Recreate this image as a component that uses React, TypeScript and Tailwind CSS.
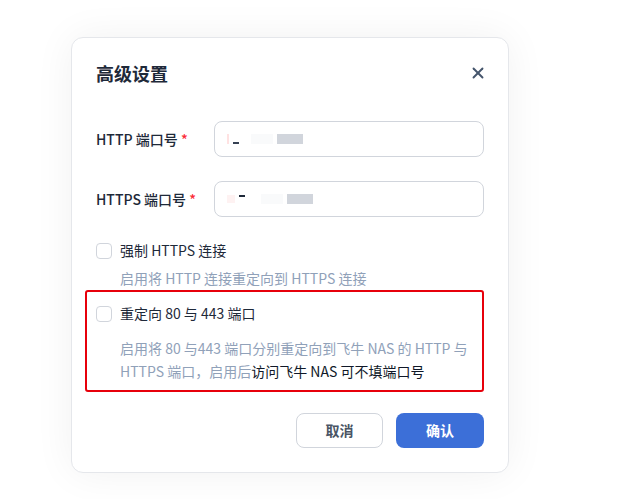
import { X } from 'lucide-react'

const font = { fontFamily: '"Noto Sans CJK SC", "Noto Sans", sans-serif' }

function Checkbox() {
  return <span className="w-4 h-4 shrink-0 rounded-[4px] border border-gray-300 bg-white" />
}

function PortField({ label, marks }: { label: string; marks: 'a' | 'b' }) {
  return (
    <div className="flex items-center">
      <label className="w-[118px] text-[14px] font-medium text-gray-800">
        {label} <span className="text-red-500">*</span>
      </label>
      <div className="flex-1 h-[36px] rounded-lg border border-gray-300 bg-white flex items-center px-3 gap-1">
        {marks === 'a' ? (
          <>
            <span className="w-[2px] h-[10px] bg-red-100" />
            <span className="w-[6px] h-[2px] bg-gray-700 mt-[8px]" />
            <span className="w-[22px] h-[10px] bg-gray-50 ml-2" />
            <span className="w-[26px] h-[10px] bg-gray-300" />
          </>
        ) : (
          <>
            <span className="w-[8px] h-[8px] bg-red-50" />
            <span className="w-[6px] h-[2px] bg-gray-800 -mt-[6px]" />
            <span className="w-[22px] h-[10px] bg-gray-50 ml-3" />
            <span className="w-[26px] h-[10px] bg-gray-300" />
          </>
        )}
      </div>
    </div>
  )
}

export default function App() {
  return (
    <div className="w-[617px] h-[499px] bg-white pt-[37px] pl-[71px]" style={font}>
      <div className="w-[438px] h-[436px] bg-white rounded-xl border border-gray-200 shadow-[0_0_40px_rgba(0,0,0,0.06)] px-6 pt-[21px] flex flex-col">
        <div className="flex items-center justify-between">
          <h2 className="text-[18px] font-bold text-gray-800 leading-7">高级设置</h2>
          <X className="w-[18px] h-[18px] text-slate-600 -mr-[3px]" strokeWidth={2.5} />
        </div>

        <div className="mt-[34px] flex flex-col gap-[24px]">
          <PortField label="HTTP 端口号" marks="a" />
          <PortField label="HTTPS 端口号" marks="b" />
        </div>

        <div className="mt-[23px]">
          <div className="flex items-center gap-2">
            <Checkbox />
            <span className="text-[14px] text-gray-800">强制 HTTPS 连接</span>
          </div>
          <p className="mt-[7px] pl-6 text-[14px] text-slate-400">启用将 HTTP 连接重定向到 HTTPS 连接</p>
        </div>

        <div className="mt-[1px] -ml-[11px] w-[399px] h-[102px] border-2 border-red-600 rounded-[3px] pl-[9px] pt-[11px]">
          <div className="flex items-center gap-2">
            <Checkbox />
            <span className="text-[14px] text-gray-800">重定向 80 与 443 端口</span>
          </div>
          <p className="mt-[13px] pl-6 text-[14px] leading-[23px] text-slate-400 whitespace-nowrap">
            启用将 80 与443 端口分别重定向到飞牛 NAS 的 HTTP 与
            <br />
            HTTPS 端口，启用后<span className="text-gray-900">访问飞牛 NAS 可不填端口号</span>
          </p>
        </div>

        <div className="mt-[21px] flex justify-end gap-[13px]">
          <button className="w-[87px] h-[35px] rounded-lg border border-gray-300 bg-white text-[14px] font-bold text-gray-600">
            取消
          </button>
          <button className="w-[88px] h-[35px] rounded-lg bg-[#3c6fd8] text-[14px] font-bold text-white">
            确认
          </button>
        </div>
      </div>
    </div>
  )
}
